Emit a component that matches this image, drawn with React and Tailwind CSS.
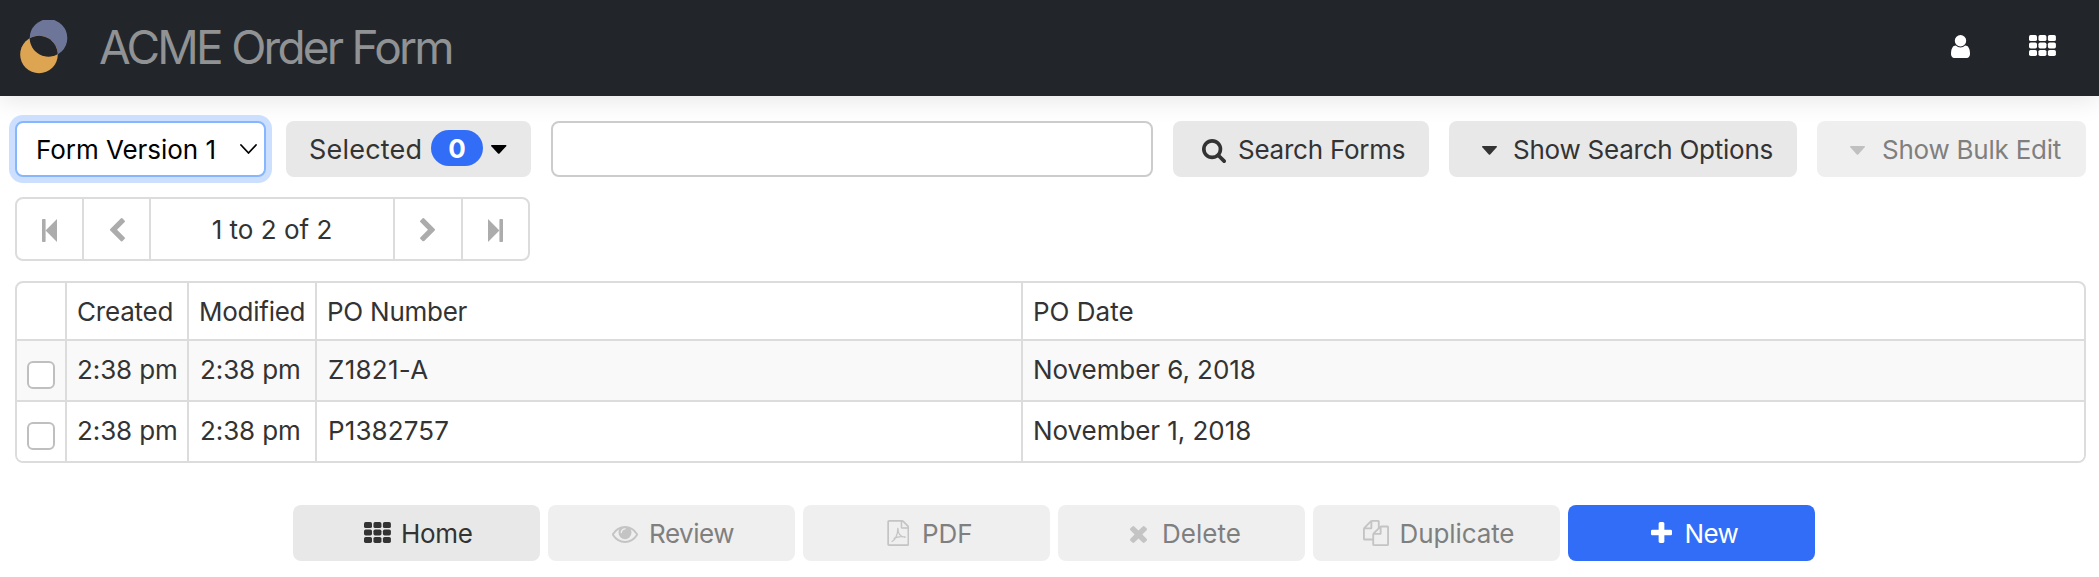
function Icon({ box, className, children }) {
  return (
    <svg viewBox={box} preserveAspectRatio="none" fill="currentColor" className={`block shrink-0 ${className}`} aria-hidden="true">
      {children}
    </svg>
  );
}

const Search = ({ className }) => (
  <Icon box="64 128 1664 1664" className={className}>
    <path d="M1216 832q0-185-131.500-316.500t-316.500-131.500-316.500 131.500-131.500 316.500 131.500 316.500 316.500 131.500 316.500-131.500 131.500-316.500zm512 832q0 52-38 90t-90 38q-54 0-90-38l-343-342q-179 124-399 124-143 0-273.500-55.500t-225-150-150-225-55.500-273.500 55.500-273.500 150-225 225-150 273.500-55.500 273.500 55.500 225 150 150 225 55.500 273.500q0 220-124 399l343 343q37 37 37 90z" />
  </Icon>
);

const Grid = ({ className }) => (
  <Icon box="0 0 27 21" className={className}>
    {[0, 7.45, 14.9].map((y) =>
      [0, 9.45, 18.9].map((x) => <rect key={`${x}-${y}`} x={x} y={y} width="8" height="6.100" rx="1.700" />)
    )}
  </Icon>
);

const User = ({ className }) => (
  <Icon box="256 128 1280 1536" className={className}>
    <path d="M1536 1399q0 109-62.500 187t-150.500 78h-854q-88 0-150.500-78t-62.500-187q0-85 8.500-160.500t31.500-152 58.500-131 94-89 134.500-34.500q131 128 313 128t313-128q76 0 134.500 34.500t94 89 58.500 131 31.500 152 8.500 160.500zm-256-887q0 159-112.500 271.500t-271.500 112.500-271.500-112.500-112.500-271.500 112.500-271.500 271.500-112.500 271.500 112.500 112.500 271.500z" />
  </Icon>
);

const Eye = ({ className }) => (
  <Icon box="0 384 1792 1152" className={className}>
    <path d="M1664 960q-152-236-381-353 61 104 61 225 0 185-131.500 316.500t-316.500 131.500-316.500-131.500-131.500-316.500q0-121 61-225-229 117-381 353 133 205 333.500 326.500t434.500 121.500 434.500-121.500 333.500-326.500zm-720-384q0-20-14-34t-34-14q-125 0-214.500 89.500t-89.500 214.500q0 20 14 34t34 14 34-14 14-34q0-86 61-147t147-61q20 0 34-14t14-34zm848 384q0 34-20 69-140 230-376.500 368.500t-499.500 138.500-499.500-139-376.500-368q-20-35-20-69t20-69q140-229 376.500-368t499.500-139 499.500 139 376.500 368q20 35 20 69z" />
  </Icon>
);

const Times = ({ className }) => (
  <Icon box="302 366 1188 1188" className={className}>
    <path d="M1490 1322q0 40-28 68l-136 136q-28 28-68 28t-68-28l-294-294-294 294q-28 28-68 28t-68-28l-136-136q-28-28-28-68t28-68l294-294-294-294q-28-28-28-68t28-68l136-136q28-28 68-28t68 28l294 294 294-294q28-28 68-28t68 28l136 136q28 28 28 68t-28 68l-294 294 294 294q28 28 28 68z" />
  </Icon>
);

const Plus = ({ className }) => (
  <Icon box="192 128 1408 1408" className={className}>
    <path d="M1600 736v192q0 40-28 68t-68 28h-416v416q0 40-28 68t-68 28h-192q-40 0-68-28t-28-68v-416h-416q-40 0-68-28t-28-68v-192q0-40 28-68t68-28h416v-416q0-40 28-68t68-28h192q40 0 68 28t28 68v416h416q40 0 68 28t28 68z" />
  </Icon>
);

const Chevron = ({ className }) => (
  <Icon box="410 26 1036 1612" className={className}>
    <path d="M1427 301l-531 531 531 531q19 19 19 45t-19 45l-166 166q-19 19-45 19t-45-19l-742-742q-19-19-19-45t19-45l742-742q19-19 45-19t45 19l166 166q19 19 19 45t-19 45z" />
  </Icon>
);

const Step = ({ className }) => (
  <Icon box="0 0 15 23" className={className}>
    <rect x="0" y="0" width="3.600" height="23" rx="0.800" />
    <path d="M15 0v23L3.600 11.500z" />
  </Icon>
);

const Caret = ({ className }) => (
  <Icon box="0 0 15 9" className={className}>
    <path d="M.6 0h13.800q.9.500.3 1.300L8.200 8.500q-.7.600-1.400 0L.3 1.300Q-.3.500.6 0z" />
  </Icon>
);

const Copy = ({ className }) => (
  <Icon box="0 0 1792 1792" className={className}>
    <path d="M1696 384q40 0 68 28t28 68v1216q0 40-28 68t-68 28h-960q-40 0-68-28t-28-68v-288h-544q-40 0-68-28t-28-68v-672q0-40 20-88t48-76l408-408q28-28 76-48t88-20h416q40 0 68 28t28 68v328q68-40 128-40h416zm-544 213l-299 299h299v-299zm-640-384l-299 299h299v-299zm196 647l316-316v-416h-384v416q0 40-28 68t-68 28h-416v640h512v-256q0-40 20-88t48-76zm956 804v-1152h-384v416q0 40-28 68t-68 28h-416v640h896z" />
  </Icon>
);

const Pdf = ({ className }) => (
  <svg viewBox="0 0 22 26" fill="none" stroke="currentColor" strokeLinecap="round" strokeLinejoin="round" className={`block shrink-0 ${className}`} aria-hidden="true">
    <path strokeWidth="1.700" d="M1.800.9h12.700q1 0 1.700.7l4.200 4.300q.7.700.7 1.700v16.600q0 .9-.9.900H1.800q-.9 0-.9-.9V1.800q0-.9.9-.9z" />
    <path strokeWidth="1.500" d="M14.200 1v6.200q0 .8.800.8H21" />
    <path strokeWidth="1.300" d="M10.600 8.300c0 3.200-.4 5.800-1.800 8.500-1.200 2.300-2.600 4.200-3.900 4.500M10.600 8.300c0 4.500 2.300 8.600 7.200 9M6.800 18.300c3-1.600 6.300-2.300 11-1.400" />
  </svg>
);

const actionBase = "flex h-14 w-[247px] items-center rounded-lg";
const muted = "bg-[#efefef] text-[#c4c4c4]";
const line = "border-[#dcdcdc]";

function Row({ shaded, number, date, numberClass, dateClass }) {
  const cell = `flex items-center border-r-2 ${line}`;
  return (
    <div className={`grid h-[61px] grid-cols-[50px_122px_128px_706px_1fr] border-t-2 ${line} ${shaded ? "bg-[#f9f9f9]" : "bg-white"}`}>
      <div className={cell}>
        <span className="ml-2.5 mt-[9px] size-7 rounded-md border-2 border-[#bfbfbf] bg-white" />
      </div>
      <div className={`${cell} pb-0.5 pl-[10px] tracking-[-0.1px]`}>2:38 pm</div>
      <div className={`${cell} pb-0.5 pl-[11px] tracking-[-0.1px]`}>2:38 pm</div>
      <div className={`${cell} pb-0.5 pl-[11px] ${numberClass}`}>{number}</div>
      <div className={`flex items-center pb-0.5 pl-[10px] ${dateClass}`}>{date}</div>
    </div>
  );
}

export default function App() {
  return (
    <div className="h-[577px] w-[2099px] overflow-hidden whitespace-pre bg-white font-['Inter',sans-serif] text-[26px] leading-8 text-[#333]">
      <header className="flex h-24 items-center bg-[#22262b] shadow-[0_4px_24px_rgba(0,0,0,0.1)]">
        <svg viewBox="0 0 48 56" className="ml-5 h-14 w-12 shrink-0" aria-hidden="true">
          <circle cx="28.500" cy="18" r="18.800" fill="#6d7698" />
          <circle cx="19" cy="34.500" r="18.800" fill="#dda552" />
          <path d="M9.700 18.200A18.800 18.800 0 0 1 37.700 34.300A18.800 18.800 0 0 1 9.700 18.200z" fill="#22262b" />
        </svg>
        <h1 className="-mt-0.5 ml-[31px] flex-1 text-[46px] font-[370] leading-[56px] tracking-[-2.75px] text-[#909294]">ACME Order Form</h1>
        <User className="mr-[59px] mt-[-3px] h-[23px] w-[19px] text-white" />
        <Grid className="mr-[43px] mt-[-5px] h-[21px] w-[27px] text-white" />
      </header>

      <div className="ml-[15px] mt-[25px] flex h-14 w-[2071px]">
        <button className="flex w-[251px] items-center rounded-lg border-2 border-[#86b7fe] bg-white pl-[19px] text-black shadow-[0_0_0_6px_#cddfff]">
          <span className="w-[204px] pt-0.5 text-left tracking-[-0.05px]">Form Version 1</span>
          <svg viewBox="0 0 17 10" className="h-2.5 w-[17px]" fill="none" stroke="currentColor" strokeWidth="1.800" strokeLinecap="round" strokeLinejoin="round">
            <path d="M1 1l7.500 8L16 1" />
          </svg>
        </button>
        <button className="ml-5 flex w-[245px] items-center rounded-lg bg-[#e8e8e8] pl-[23px]">
          <span className="w-[122px] pt-px text-left text-[27px] tracking-[0.2px]">Selected</span>
          <span className="flex h-9 w-[52px] -translate-y-px items-center justify-center rounded-full bg-[#316df6] font-bold text-white"><span className="pt-0.5">0</span></span>
          <Caret className="ml-2 h-[9px] w-[15.500px] text-black" />
        </button>
        <input className="ml-5 w-[602px] rounded-lg border-2 border-[#ccc] bg-white px-4 outline-none" />
        <button className="ml-5 flex w-[256px] items-center rounded-lg bg-[#e8e8e8] pl-[29px]">
          <Search className="mt-[3px] size-6" />
          <span className="ml-3 pt-0.5 tracking-[-0.24px]">Search Forms</span>
        </button>
        <button className="ml-5 flex w-[348px] items-center rounded-lg bg-[#e8e8e8] pl-[33px]">
          <Caret className="mt-0.5 h-[9px] w-[15px]" />
          <span className="ml-4 pt-0.5 tracking-[-0.24px]">Show Search Options</span>
        </button>
        <button className="ml-5 flex w-[269px] items-center rounded-lg bg-[#efefef] pl-[33px]">
          <Caret className="mt-0.5 h-[9px] w-[15px] text-[#c0c0c0]" />
          <span className="ml-[17px] pt-0.5 tracking-[-0.24px] text-[#7f7f7f]">Show Bulk Edit</span>
        </button>
      </div>

      <div className={`ml-[15px] mt-5 flex h-16 w-[515px] rounded-lg border-2 text-[#acacac] ${line}`}>
        <div className={`flex w-[67px] items-center border-r-2 pl-[25px] pt-[3px] ${line}`}><Step className="h-[23px] w-[15px]" /></div>
        <div className={`flex w-[67px] items-center border-r-2 pl-[25.500px] pt-0.5 ${line}`}><Chevron className="h-[23.500px] w-[15px]" /></div>
        <div className={`flex w-[244px] items-center justify-center border-r-2 pt-px text-[#333] ${line}`}>1 to 2 of 2</div>
        <div className={`flex w-[68px] items-center border-r-2 pl-[25px] pt-0.5 ${line}`}><Chevron className="h-[23.500px] w-[15px] rotate-180" /></div>
        <div className="flex items-center pl-[25px] pt-[3px]"><Step className="h-[23px] w-[15px] rotate-180" /></div>
      </div>

      <div className={`ml-[15px] mt-5 w-[2071px] overflow-hidden rounded-lg border-2 ${line}`}>
        <div className="grid h-14 grid-cols-[50px_122px_128px_706px_1fr]">
          <div className={`border-r-2 ${line}`} />
          <div className={`flex items-center border-r-2 pl-[10px] pt-0.5 tracking-[-0.2px] ${line}`}>Created</div>
          <div className={`flex items-center border-r-2 pl-[10px] pt-0.5 tracking-[-0.25px] ${line}`}>Modified</div>
          <div className={`flex items-center border-r-2 pl-[10px] pt-0.5 tracking-[-0.25px] ${line}`}>PO Number</div>
          <div className="flex items-center pl-[10px] pt-0.5">PO Date</div>
        </div>
        <Row shaded number="Z1821-A" date="November 6, 2018" numberClass="tracking-[0.28px]" dateClass="tracking-[-0.07px]" />
        <Row number="P1382757" date="November 1, 2018" numberClass="tracking-[0.1px]" dateClass="tracking-[-0.06px]" />
      </div>

      <div className="ml-[293px] mt-[42px] flex gap-2">
        <button className={`${actionBase} bg-[#e8e8e8] pl-[71px]`}>
          <Grid className="-mt-px h-[21px] w-[27px]" />
          <span className="ml-[10px] pt-0.5 tracking-[-0.3px]">Home</span>
        </button>
        <button className={`${actionBase} ${muted} pl-16`}>
          <Eye className="mt-0.5 h-[17px] w-[26px]" />
          <span className="ml-[11px] pt-0.5 tracking-[-0.45px] text-[#7f7f7f]">Review</span>
        </button>
        <button className={`${actionBase} ${muted} pl-[83.500px]`}>
          <Pdf className="h-[26px] w-[22.500px]" />
          <span className="ml-[13px] pt-0.5 text-[#7f7f7f]">PDF</span>
        </button>
        <button className={`${actionBase} ${muted} pl-[72px]`}>
          <Times className="mt-[3px] size-[17px]" />
          <span className="ml-[15px] pt-0.5 text-[#7f7f7f]">Delete</span>
        </button>
        <button className={`${actionBase} ${muted} pl-[49.500px]`}>
          <Copy className="h-[26px] w-[26px]" />
          <span className="ml-[11px] pt-0.5 tracking-[-0.1px] text-[#7f7f7f]">Duplicate</span>
        </button>
        <button className={`${actionBase} bg-[#316df6] pl-[82.500px] text-white`}>
          <Plus className="-mt-px h-[21px] w-[21px]" />
          <span className="ml-[13px] pt-0.5 tracking-[-0.6px]">New</span>
        </button>
      </div>
    </div>
  );
}
